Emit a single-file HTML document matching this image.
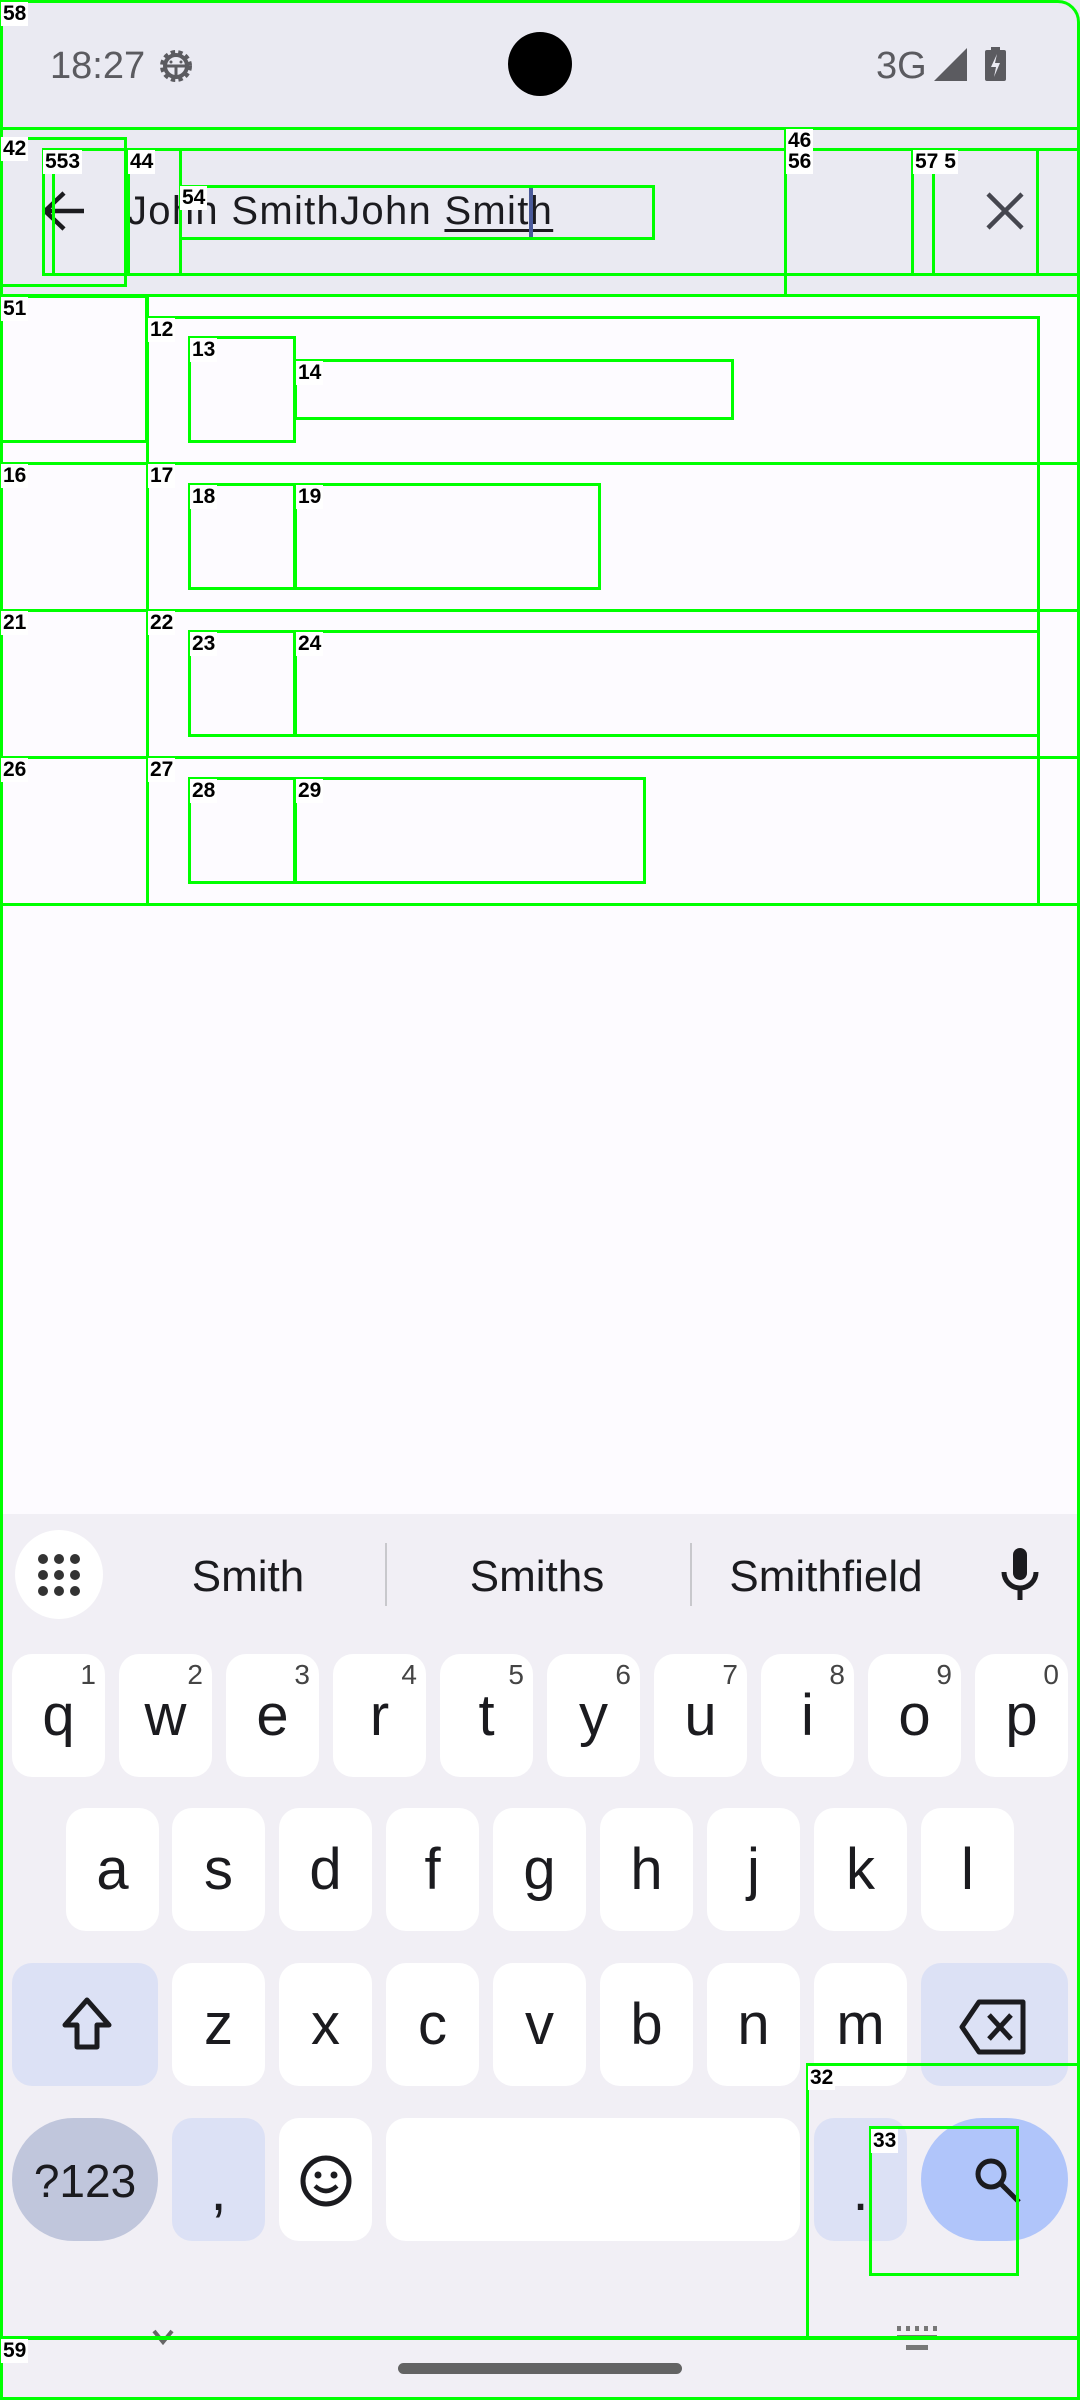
<!DOCTYPE html>
<html><head><meta charset="utf-8"><style>
*{margin:0;padding:0;box-sizing:border-box}
body{width:1080px;height:2400px;position:relative;overflow:hidden;background:#fdfbff;font-family:"Liberation Sans",sans-serif}
.a{position:absolute}
.g{position:absolute;border:3px solid #00ff00}
.l{position:absolute;background:#fff;color:#000;font:bold 21px "Liberation Sans",sans-serif;line-height:24px;padding:0 2px}
.k{position:absolute;background:#fff;border-radius:20px;color:#1b1b1f;font-size:58px;text-align:center;line-height:124px;width:93px;height:123px}
.k sup{position:absolute;right:9px;top:6px;font-size:28px;line-height:30px;color:#444}
.s{background:#dce1f5}
</style></head><body>
<!-- status bar -->
<div class="a" style="left:0;top:0;width:1080px;height:296px;background:#eaeaf2"></div>
<div class="a" style="left:50px;top:45px;font-size:38px;color:#5b5b60">18:27</div>
<svg class="a" style="left:156px;top:46px" width="40" height="40" viewBox="0 0 40 40"><circle cx="20" cy="20" r="13" fill="none" stroke="#5b5b60" stroke-width="6" stroke-dasharray="4 3"/><circle cx="20" cy="20" r="11" fill="none" stroke="#5b5b60" stroke-width="4"/><path d="M9 20h22M20 20v11" stroke="#5b5b60" stroke-width="3"/><circle cx="15" cy="16" r="1.5" fill="#5b5b60"/><circle cx="25" cy="16" r="1.5" fill="#5b5b60"/></svg>
<div class="a" style="left:508px;top:32px;width:64px;height:64px;border-radius:50%;background:#000"></div>
<div class="a" style="left:876px;top:45px;font-size:38px;color:#5b5b60">3G</div>
<svg class="a" style="left:934px;top:48px" width="36" height="34"><path d="M33 0V33H0Z" fill="#5b5b60"/></svg>
<svg class="a" style="left:985px;top:47px" width="22" height="34"><rect x="0" y="3" width="21" height="31" rx="2" fill="#5b5b60"/><rect x="6" y="0" width="9" height="4" fill="#5b5b60"/><path d="M12 7L6 20h5l-2 10 6-14h-5z" fill="#eaeaf2"/></svg>
<!-- app bar -->
<svg class="a" style="left:40px;top:188px" width="46" height="46" viewBox="0 0 46 46"><path d="M44 23H6M24 5L5 23l19 18" fill="none" stroke="#1b1b1f" stroke-width="4.5"/></svg>
<div class="a" style="left:127px;top:189px;font-size:40px;color:#1b1b1f;white-space:nowrap;letter-spacing:1.3px">John SmithJohn <span style="text-decoration:underline;text-decoration-thickness:3px;text-underline-offset:5px">Smith</span></div>
<div class="a" style="left:529px;top:188px;width:4px;height:50px;background:#4a5a9a"></div>
<svg class="a" style="left:985px;top:191px" width="40" height="40"><path d="M3 3L37 37M37 3L3 37" stroke="#45464f" stroke-width="4.5"/></svg>
<!-- keyboard -->
<div class="a" style="left:0;top:1514px;width:1080px;height:886px;background:#f1eff5"></div>
<div class="a" style="left:15px;top:1530px;width:88px;height:89px;border-radius:50%;background:#fff"></div>
<svg class="a" style="left:37px;top:1553px" width="44" height="44"><g fill="#333"><circle cx="6" cy="6" r="5"/><circle cx="22" cy="6" r="5"/><circle cx="38" cy="6" r="5"/><circle cx="6" cy="22" r="5"/><circle cx="22" cy="22" r="5"/><circle cx="38" cy="22" r="5"/><circle cx="6" cy="38" r="5"/><circle cx="22" cy="38" r="5"/><circle cx="38" cy="38" r="5"/></g></svg>
<div class="a" style="left:148px;top:1552px;width:200px;text-align:center;font-size:44px;color:#1b1b1f">Smith</div>
<div class="a" style="left:437px;top:1552px;width:200px;text-align:center;font-size:44px;color:#1b1b1f">Smiths</div>
<div class="a" style="left:706px;top:1552px;width:240px;text-align:center;font-size:44px;color:#1b1b1f">Smithfield</div>
<div class="a" style="left:385px;top:1543px;width:2px;height:63px;background:#c8c8cc"></div>
<div class="a" style="left:690px;top:1543px;width:2px;height:63px;background:#c8c8cc"></div>
<svg class="a" style="left:1001px;top:1548px" width="38" height="52"><rect x="12" y="0" width="14" height="32" rx="7" fill="#1b1b1f"/><path d="M3 24a16 16 0 0 0 32 0M19 40v12" fill="none" stroke="#1b1b1f" stroke-width="5"/></svg>
<!-- row1 -->
<div class="k" style="left:12px;top:1654px">q<sup>1</sup></div>
<div class="k" style="left:119px;top:1654px">w<sup>2</sup></div>
<div class="k" style="left:226px;top:1654px">e<sup>3</sup></div>
<div class="k" style="left:333px;top:1654px">r<sup>4</sup></div>
<div class="k" style="left:440px;top:1654px">t<sup>5</sup></div>
<div class="k" style="left:547px;top:1654px">y<sup>6</sup></div>
<div class="k" style="left:654px;top:1654px">u<sup>7</sup></div>
<div class="k" style="left:761px;top:1654px">i<sup>8</sup></div>
<div class="k" style="left:868px;top:1654px">o<sup>9</sup></div>
<div class="k" style="left:975px;top:1654px">p<sup>0</sup></div>
<!-- row2 -->
<div class="k" style="left:66px;top:1808px">a</div>
<div class="k" style="left:172px;top:1808px">s</div>
<div class="k" style="left:279px;top:1808px">d</div>
<div class="k" style="left:386px;top:1808px">f</div>
<div class="k" style="left:493px;top:1808px">g</div>
<div class="k" style="left:600px;top:1808px">h</div>
<div class="k" style="left:707px;top:1808px">j</div>
<div class="k" style="left:814px;top:1808px">k</div>
<div class="k" style="left:921px;top:1808px">l</div>
<!-- row3 -->
<div class="k s" style="left:12px;top:1963px;width:146px"><svg style="position:absolute;left:45px;top:32px" width="60" height="60" viewBox="0 0 60 60"><path d="M30 5L8 30h12v22h20V30h12z" fill="none" stroke="#1b1b1f" stroke-width="5" stroke-linejoin="round"/></svg></div>
<div class="k" style="left:172px;top:1963px">z</div>
<div class="k" style="left:279px;top:1963px">x</div>
<div class="k" style="left:386px;top:1963px">c</div>
<div class="k" style="left:493px;top:1963px">v</div>
<div class="k" style="left:600px;top:1963px">b</div>
<div class="k" style="left:707px;top:1963px">n</div>
<div class="k" style="left:814px;top:1963px">m</div>
<div class="k s" style="left:921px;top:1963px;width:147px"><svg style="position:absolute;left:38px;top:36px" width="70" height="56" viewBox="0 0 70 56"><path d="M20 3H64V53H20L3 28Z" fill="none" stroke="#1b1b1f" stroke-width="5" stroke-linejoin="round"/><path d="M30 16L52 40M52 16L30 40" stroke="#1b1b1f" stroke-width="5"/></svg></div>
<!-- row4 -->
<div class="k" style="left:12px;top:2118px;width:146px;border-radius:62px;background:#c0c6dc;font-size:46px;line-height:126px">?123</div>
<div class="k s" style="left:172px;top:2118px;line-height:146px">,</div>
<div class="k" style="left:279px;top:2118px"><svg style="position:absolute;left:20px;top:36px" width="54" height="54"><circle cx="27" cy="27" r="23" fill="none" stroke="#1b1b1f" stroke-width="5"/><circle cx="19" cy="21" r="3.5" fill="#1b1b1f"/><circle cx="35" cy="21" r="3.5" fill="#1b1b1f"/><path d="M16 32q11 10 22 0" fill="none" stroke="#1b1b1f" stroke-width="4.5"/></svg></div>
<div class="k" style="left:386px;top:2118px;width:414px"></div>
<div class="k s" style="left:814px;top:2118px;line-height:146px">.</div>
<div class="k" style="left:921px;top:2118px;width:147px;border-radius:62px;background:#b0c5fa"><svg style="position:absolute;left:52px;top:38px" width="50" height="50"><circle cx="18" cy="18" r="13" fill="none" stroke="#1b1b1f" stroke-width="5"/><path d="M28 28L46 46" stroke="#1b1b1f" stroke-width="5"/></svg></div>
<svg class="a" style="left:152px;top:2329px" width="22" height="16"><path d="M2 2l9 11 9-11" fill="none" stroke="#666" stroke-width="4"/></svg>
<svg class="a" style="left:897px;top:2326px" width="42" height="34"><g fill="#777"><rect x="0" y="0" width="4" height="5"/><rect x="9" y="0" width="4" height="5"/><rect x="18" y="0" width="4" height="5"/><rect x="27" y="0" width="4" height="5"/><rect x="36" y="0" width="4" height="5"/><rect x="0" y="9" width="40" height="4"/><rect x="9" y="19" width="22" height="5"/></g></svg>
<div class="a" style="left:398px;top:2363px;width:284px;height:11px;border-radius:6px;background:#636363"></div>
<!-- overlay boxes -->
<div class="g" style="left:0;top:0;width:1080px;height:2340px;border-radius:0 22px 0 0"></div>
<div class="g" style="left:0;top:2336px;width:1080px;height:64px"></div>
<div class="g" style="left:0;top:127px;width:1080px;height:170px"></div>
<div class="g" style="left:0;top:137px;width:127px;height:150px"></div>
<div class="g" style="left:42px;top:148px;width:1038px;height:128px"></div>
<div class="g" style="left:52px;top:148px;width:3px;height:128px;border-width:0 0 0 3px"></div>
<div class="g" style="left:127px;top:148px;width:3px;height:128px;border-width:0 0 0 3px"></div>
<div class="g" style="left:179px;top:148px;width:3px;height:128px;border-width:0 0 0 3px"></div>
<div class="g" style="left:179px;top:185px;width:476px;height:55px"></div>
<div class="g" style="left:784px;top:127px;width:3px;height:170px;border-width:0 0 0 3px"></div>
<div class="g" style="left:911px;top:148px;width:3px;height:128px;border-width:0 0 0 3px"></div>
<div class="g" style="left:932px;top:148px;width:3px;height:128px;border-width:0 0 0 3px"></div>
<div class="g" style="left:1036px;top:148px;width:3px;height:128px;border-width:0 0 0 3px"></div>
<div class="g" style="left:0;top:295px;width:148px;height:148px"></div>
<div class="g" style="left:146px;top:295px;width:3px;height:611px;border-width:0 0 0 3px"></div>
<div class="g" style="left:146px;top:316px;width:894px;height:590px"></div>
<div class="g" style="left:0;top:462px;width:1080px;height:3px;border-width:3px 0 0 0"></div>
<div class="g" style="left:0;top:609px;width:1080px;height:3px;border-width:3px 0 0 0"></div>
<div class="g" style="left:0;top:756px;width:1080px;height:3px;border-width:3px 0 0 0"></div>
<div class="g" style="left:0;top:903px;width:1080px;height:3px;border-width:3px 0 0 0"></div>
<div class="g" style="left:188px;top:336px;width:108px;height:107px"></div>
<div class="g" style="left:294px;top:359px;width:440px;height:61px"></div>
<div class="g" style="left:188px;top:483px;width:108px;height:107px"></div>
<div class="g" style="left:294px;top:483px;width:307px;height:107px"></div>
<div class="g" style="left:188px;top:630px;width:108px;height:107px"></div>
<div class="g" style="left:294px;top:630px;width:746px;height:107px"></div>
<div class="g" style="left:188px;top:777px;width:108px;height:107px"></div>
<div class="g" style="left:294px;top:777px;width:352px;height:107px"></div>
<div class="g" style="left:806px;top:2063px;width:274px;height:276px"></div>
<div class="g" style="left:869px;top:2126px;width:150px;height:150px"></div>
<div class="l" style="left:1px;top:2px">58</div>
<div class="l" style="left:1px;top:137px">42</div>
<div class="l" style="left:43px;top:150px">553</div>
<div class="l" style="left:128px;top:150px">44</div>
<div class="l" style="left:180px;top:186px">54</div>
<div class="l" style="left:786px;top:129px">46</div>
<div class="l" style="left:786px;top:150px">56</div>
<div class="l" style="left:913px;top:150px">57 5</div>
<div class="l" style="left:1px;top:297px">51</div>
<div class="l" style="left:148px;top:318px">12</div>
<div class="l" style="left:190px;top:338px">13</div>
<div class="l" style="left:296px;top:361px">14</div>
<div class="l" style="left:1px;top:464px">16</div>
<div class="l" style="left:148px;top:464px">17</div>
<div class="l" style="left:190px;top:485px">18</div>
<div class="l" style="left:296px;top:485px">19</div>
<div class="l" style="left:1px;top:611px">21</div>
<div class="l" style="left:148px;top:611px">22</div>
<div class="l" style="left:190px;top:632px">23</div>
<div class="l" style="left:296px;top:632px">24</div>
<div class="l" style="left:1px;top:758px">26</div>
<div class="l" style="left:148px;top:758px">27</div>
<div class="l" style="left:190px;top:779px">28</div>
<div class="l" style="left:296px;top:779px">29</div>
<div class="l" style="left:808px;top:2066px">32</div>
<div class="l" style="left:871px;top:2129px">33</div>
<div class="l" style="left:1px;top:2339px">59</div>
</body></html>
